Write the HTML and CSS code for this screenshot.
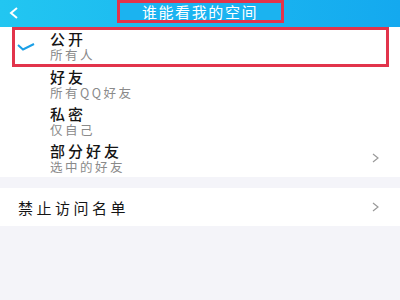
FILE: index.html
```html
<!DOCTYPE html>
<html>
<head>
  <title>谁能看我的空间</title>
  <link rel="stylesheet" href="styles.css">
</head>
<body>
  <div class="topbar">
    <div class="back">
      <svg width="10" height="12" viewBox="0 0 10 12"><polyline points="8,1 2,6 8,11" fill="none" stroke="#fff" stroke-width="2"/></svg>
    </div>
    <h1 class="title">谁能看我的空间</h1>
    <div></div>
  </div>

  <div class="group options">
    <div class="row marked">
      <div class="check">
        <svg width="18" height="8" viewBox="0 0 18 8"><polyline points="1,2 6,6.5 17,1" fill="none" stroke="#1a9fe6" stroke-width="2"/></svg>
      </div>
      <div class="text">
        <div class="name">公开</div>
        <div class="desc">所有人</div>
      </div>
      <div></div>
    </div>
    <div class="row">
      <div class="check"></div>
      <div class="text">
        <div class="name">好友</div>
        <div class="desc">所有QQ好友</div>
      </div>
      <div></div>
    </div>
    <div class="row">
      <div class="check"></div>
      <div class="text">
        <div class="name">私密</div>
        <div class="desc">仅自己</div>
      </div>
      <div></div>
    </div>
    <div class="row">
      <div class="check"></div>
      <div class="text">
        <div class="name">部分好友</div>
        <div class="desc">选中的好友</div>
      </div>
      <div class="arrow">
        <svg width="8" height="10" viewBox="0 0 8 10"><polyline points="1,1 6,5 1,9" fill="none" stroke="#9a9a9a" stroke-width="1.2"/></svg>
      </div>
    </div>
  </div>

  <div class="group">
    <div class="row single">
      <div class="name big">禁止访问名单</div>
      <div class="arrow">
        <svg width="8" height="10" viewBox="0 0 8 10"><polyline points="1,1 6,5 1,9" fill="none" stroke="#9a9a9a" stroke-width="1.2"/></svg>
      </div>
    </div>
  </div>
</body>
</html>
```

FILE: styles.css
```css
body {
  margin: 0;
  background-color: #f4f4f9;
  font-family: "Noto Sans CJK SC", "Noto Sans", sans-serif;
}

svg {
  display: block;
}

.topbar {
  height: 27px;
  display: grid;
  grid-template-columns: 1fr auto 1fr;
  align-items: start;
  background: linear-gradient(90deg, #22c6f1, #14a9ef);
}

.back {
  padding: 7px 0 0 9px;
}

.title {
  margin: 0;
  width: 167px;
  height: 23px;
  box-sizing: border-box;
  border: 3px solid #e2344b;
  background-color: #1bb3f0;
  color: #fff;
  font-size: 15px;
  font-weight: normal;
  line-height: 17px;
  letter-spacing: 1.6px;
  text-align: center;
}

.group {
  background-color: #fff;
}

.options {
  padding-bottom: 1px;
}

.group + .group {
  margin-top: 11px;
}

.row {
  height: 37px;
  display: grid;
  grid-template-columns: 50px 1fr 28px;
  align-items: center;
}

.row.marked {
  height: 38px;
  position: relative;
}

.row.marked::after {
  content: "";
  position: absolute;
  left: 12px;
  right: 11px;
  top: 0;
  bottom: -2px;
  border: 3px solid #e2344b;
}

.check {
  padding: 2px 0 0 17px;
}

.name {
  font-size: 15px;
  line-height: 17px;
  font-weight: 500;
  letter-spacing: 3px;
  color: #151515;
}

.desc {
  margin-top: 1px;
  font-size: 12.5px;
  line-height: 14px;
  letter-spacing: 2.5px;
  color: #8a8a8a;
}

.row.single {
  height: 38px;
  grid-template-columns: 1fr 28px;
  padding-left: 18px;
}

.name.big {
  font-weight: normal;
  letter-spacing: 3.5px;
}
```
